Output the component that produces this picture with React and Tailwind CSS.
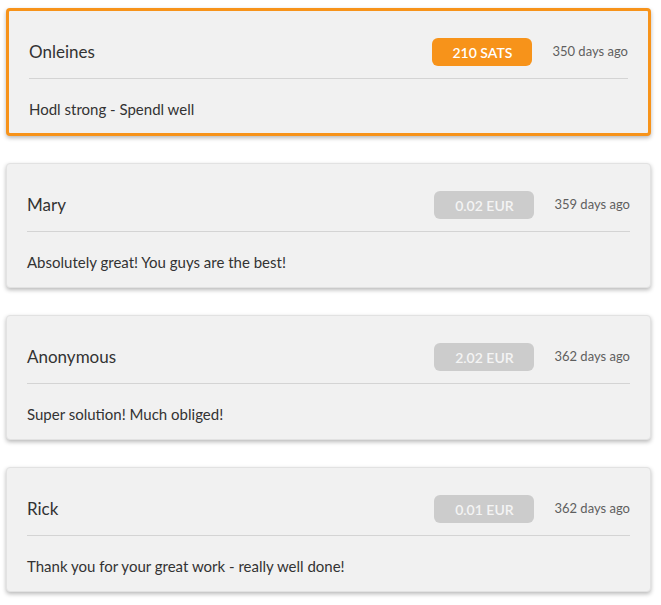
import React from 'react';

const donations = [
    { name: 'Onleines', amount: '210 SATS', ago: '350 days ago', message: 'Hodl strong - Spendl well', highlight: true },
    { name: 'Mary', amount: '0.02 EUR', ago: '359 days ago', message: 'Absolutely great! You guys are the best!' },
    { name: 'Anonymous', amount: '2.02 EUR', ago: '362 days ago', message: 'Super solution! Much obliged!' },
    { name: 'Rick', amount: '0.01 EUR', ago: '362 days ago', message: 'Thank you for your great work - really well done!' },
];

const DonationCard = ({ item }) => {
    const cardClass = item.highlight
        ? 'border-[3px] border-[#f7931a]'
        : 'border border-[#e2e2e2]';
    const badgeClass = item.highlight
        ? 'bg-[#f7931a] text-white'
        : 'bg-[#cccccc] text-[#f4f4f4]';

    return (
        <div className={`bg-[#f1f1f1] rounded-[4px] shadow-[0_2px_4px_rgba(0,0,0,0.28)] ${cardClass}`}>
            {/* Header */}
            <div className="mx-5 pt-[27px] pb-3 border-b border-[#d4d4d4] flex items-center">
                <div className="flex-1 text-[17px] text-[#333333]">{item.name}</div>
                <div className={`w-[100px] h-7 rounded-[6px] flex items-center justify-center text-[14px] font-semibold ${badgeClass}`}>
                    {item.amount}
                </div>
                <div className="ml-5 text-[13px] text-[#5f5f5f]">{item.ago}</div>
            </div>

            {/* Message */}
            <div className={`px-5 pt-5 text-[15px] leading-5 text-[#333333] ${item.highlight ? 'pb-[14px]' : 'pb-[15px]'}`}>
                {item.message}
            </div>
        </div>
    );
};

export default function App() {
    return (
        <div className="min-h-screen bg-white pl-[6px] pr-[10px] pt-2 flex flex-col gap-[27px]" style={{ fontFamily: 'Lato, "Open Sans", sans-serif' }}>
            {donations.map((d) => (
                <DonationCard key={d.name} item={d} />
            ))}
        </div>
    );
}
